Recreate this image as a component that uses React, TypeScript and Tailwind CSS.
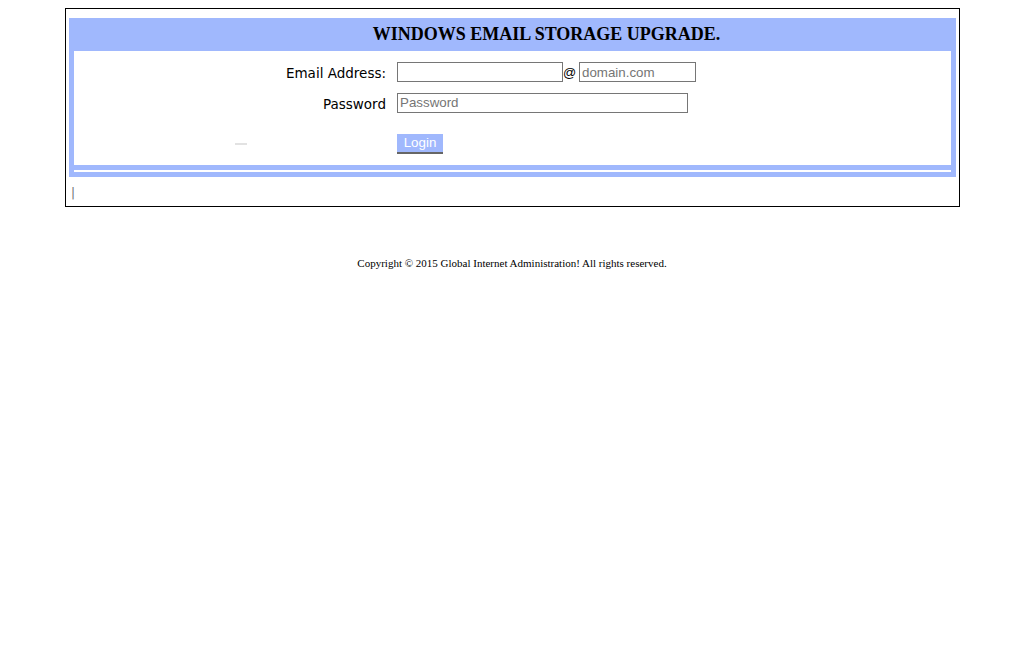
import React from "react";

export default function App() {
  return (
    <div className="min-h-[652px] w-[1024px] bg-white pt-2">
      <div className="ml-[65px] h-[199px] w-[895px] border border-black pl-[3px] pt-[9px]">
        <div className="w-[887px] bg-[#a0b8fd] pb-[5px]">
          <div
            className="flex h-[33px] items-center justify-center pl-[68px] text-[18px] font-bold text-black"
            style={{ fontFamily: '"Liberation Serif", "Times New Roman", serif' }}
          >
            WINDOWS EMAIL STORAGE UPGRADE.
          </div>
          <div className="mx-[5px] h-[114px] bg-white">
            <div className="pt-[11px]">
              <div className="flex h-[20px] items-center">
                <div
                  className="w-[312px] translate-y-[1px] text-right text-[13.5px] leading-[20px] text-black"
                  style={{ fontFamily: '"DejaVu Sans", Verdana, sans-serif' }}
                >
                  Email Address:
                </div>
                <div className="ml-[11px] flex items-center">
                  <input
                    className="h-[20px] w-[166px] border border-[#767676] px-[2px] text-[13px] outline-none"
                    style={{ fontFamily: '"Liberation Sans", Arial, sans-serif' }}
                  />
                  <span
                    className="w-[16px] translate-y-[1px] text-[13px] leading-[20px] text-black"
                    style={{ fontFamily: '"Liberation Sans", Arial, sans-serif' }}
                  >
                    @
                  </span>
                  <input
                    placeholder="domain.com"
                    className="h-[20px] w-[117px] border border-[#767676] px-[2px] text-[13.33px] outline-none placeholder:text-[#757575]"
                    style={{ fontFamily: '"Liberation Sans", Arial, sans-serif' }}
                  />
                </div>
              </div>
              <div className="mt-[9px] flex h-[20px] items-center">
                <div
                  className="w-[312px] translate-y-[3px] text-right text-[13.5px] leading-[20px] text-black"
                  style={{ fontFamily: '"DejaVu Sans", Verdana, sans-serif' }}
                >
                  Password
                </div>
                <div className="ml-[11px]">
                  <input
                    type="text"
                    placeholder="Password"
                    className="h-[20px] w-[291px] border border-[#767676] px-[2px] text-[13.33px] outline-none placeholder:text-[#757575]"
                    style={{ fontFamily: '"Liberation Sans", Arial, sans-serif' }}
                  />
                </div>
              </div>
              <div className="mt-[20px] flex h-[20px] items-center">
                <div className="flex w-[312px] items-center">
                  <div className="ml-[161px] mt-[5px] h-[2px] w-[12px] bg-[#e2e2e2]" />
                </div>
                <div className="ml-[11px]">
                  <button
                    className="h-[20px] w-[46px] border-b-2 border-[#666666] bg-[#a0b8fd] text-[13.33px] leading-[18px] text-white"
                    style={{ fontFamily: '"Liberation Sans", Arial, sans-serif' }}
                  >
                    Login
                  </button>
                </div>
              </div>
            </div>
          </div>
          <div className="mx-[5px] mt-[5px] h-[2px] bg-white" />
        </div>
        <div
          className="mt-[9px] pl-[2px] text-[12px] leading-[14px] text-[#707070]"
          style={{ fontFamily: '"DejaVu Sans", Verdana, sans-serif' }}
        >
          |
        </div>
      </div>
      <div
        className="mt-[50px] text-center text-[11px] leading-[13px] text-black"
        style={{ fontFamily: '"Liberation Serif", "Times New Roman", serif' }}
      >
        Copyright © 2015 Global Internet Administration! All rights reserved.
      </div>
    </div>
  );
}
